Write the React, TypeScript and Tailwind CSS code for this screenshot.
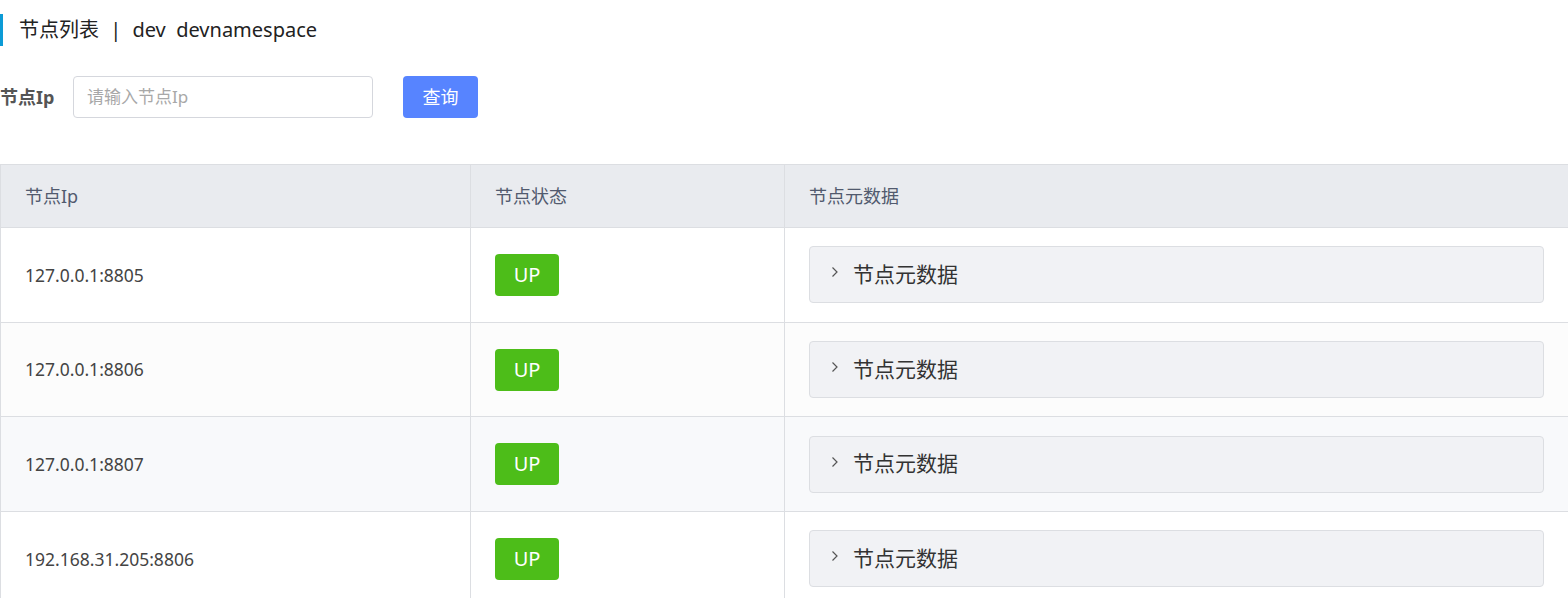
import React from "react";

const rows = [
  { ip: "127.0.0.1:8805", bg: "bg-white" },
  { ip: "127.0.0.1:8806", bg: "bg-[#fcfcfc]" },
  { ip: "127.0.0.1:8807", bg: "bg-[#f8f9fb]" },
  { ip: "192.168.31.205:8806", bg: "bg-white" },
];

export default function App() {
  return (
    <div
      className="w-[1568px] h-[598px] overflow-hidden bg-white text-[#333]"
      style={{ fontFamily: '"Noto Sans", "Noto Sans CJK SC", sans-serif' }}
    >
      <div className="pt-[14px] flex items-stretch h-[46px]">
        <div className="w-[3px] bg-[#0c9bd6]" />
        <div className="pl-[16px] text-[20px] leading-[32px] text-[#222] whitespace-pre">
          节点列表 <span className="px-[6px]">|</span> dev{"  "}devnamespace
        </div>
      </div>

      <div className="mt-[30px] flex items-center h-[42px]">
        <div className="w-[73px] text-[18px] font-bold text-[#555]">节点Ip</div>
        <div className="w-[300px] h-[42px] border border-[#d5d7dd] rounded-[4px] flex items-center pl-[13px] text-[17px] text-[#a8a8a8]">
          请输入节点Ip
        </div>
        <button className="ml-[30px] w-[75px] h-[42px] rounded-[4px] bg-[#5784ff] text-white text-[18px]">
          查询
        </button>
      </div>

      <div className="mt-[46px] border-t border-[#dcdee2]">
        <div className="flex h-[63px] bg-[#e9ebef] border-b border-[#dcdee2] border-l text-[18px] text-[#515a6e]">
          <div className="w-[470px] border-r border-[#dcdee2] pl-[24px] flex items-center">节点Ip</div>
          <div className="w-[314px] border-r border-[#dcdee2] pl-[24px] flex items-center">节点状态</div>
          <div className="flex-1 pl-[24px] flex items-center">节点元数据</div>
        </div>
        {rows.map((r) => (
          <div key={r.ip} className={`flex h-[94.7px] border-b border-l border-[#dcdee2] ${r.bg}`}>
            <div className="w-[470px] border-r border-[#dcdee2] pl-[24px] flex items-center text-[17.5px] text-[#444]">
              {r.ip}
            </div>
            <div className="w-[314px] border-r border-[#dcdee2] pl-[24px] flex items-center">
              <div className="w-[64px] h-[42px] rounded-[4px] bg-[#4dbd19] text-white text-[20px] flex items-center justify-center">
                UP
              </div>
            </div>
            <div className="flex-1 pl-[24px] pr-[24px] flex items-center">
              <div className="w-full h-[57px] rounded-[4px] border border-[#dcdee2] bg-[#f1f2f5] flex items-center pl-[19px]">
                <svg width="12" height="14" viewBox="0 0 12 14" className="mr-[12px] -mt-[5px]">
                  <path d="M3.5 2.5 L8 7 L3.5 11.5" fill="none" stroke="#555" strokeWidth="1.2" />
                </svg>
                <span className="text-[21px] text-[#333]">节点元数据</span>
              </div>
            </div>
          </div>
        ))}
      </div>
    </div>
  );
}
